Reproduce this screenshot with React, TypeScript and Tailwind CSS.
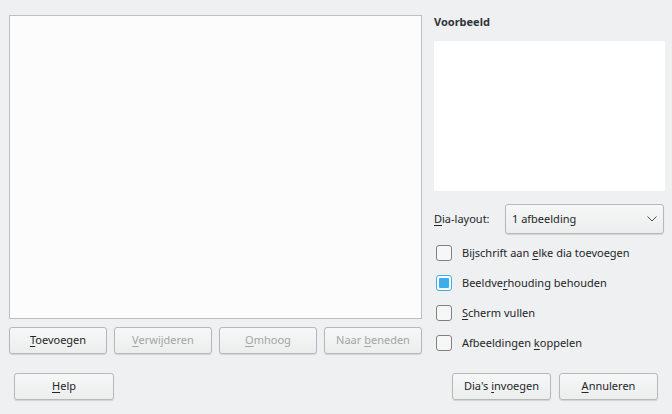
import type { ReactNode } from 'react';

function Btn({ children, disabled = false, className = '' }: { children: ReactNode; disabled?: boolean; className?: string }) {
  return (
    <button
      className={`flex h-[27px] items-center justify-center rounded-[3px] border border-[#b6b8ba] bg-gradient-to-b from-[#f6f7f7] to-[#eceded] shadow-[0_1px_1px_rgba(0,0,0,0.12)] text-[11px] ${
        disabled ? 'text-[#a3a5a6]' : 'text-[#232627]'
      } ${className}`}
    >
      <span>{children}</span>
    </button>
  );
}

function U({ children }: { children: ReactNode }) {
  return <span className="underline underline-offset-[2px] decoration-1">{children}</span>;
}

function Check({ checked = false, children }: { checked?: boolean; children: ReactNode }) {
  return (
    <div className="flex h-[30px] items-center pl-[2px]">
      {checked ? (
        <div className="flex h-[16px] w-[16px] items-center justify-center rounded-[3px] border border-[#3daee9] bg-[#fcfcfc]">
          <div className="h-[10px] w-[10px] rounded-[1px] bg-[#3daee9]" />
        </div>
      ) : (
        <div className="h-[16px] w-[16px] rounded-[3px] border border-[#7f8283] bg-[#f7f7f7]" />
      )}
      <span className="ml-[10px] text-[11px] text-[#232627]">{children}</span>
    </div>
  );
}

export default function App() {
  return (
    <div className="flex h-[414px] w-[672px] flex-col bg-[#eff0f1] font-['Noto_Sans','DejaVu_Sans',sans-serif] text-[#232627]">
      <div className="flex gap-[12px] pl-[9px] pt-[13px]">
        <div className="mt-[2px] flex w-[413px] flex-col">
          <div className="h-[304px] border border-[#bcbebf] bg-[#fcfcfc]" />
          <div className="mt-[8px] grid grid-cols-4 gap-[7px]">
            <Btn><U>T</U>oevoegen</Btn>
            <Btn disabled><U>V</U>erwijderen</Btn>
            <Btn disabled><U>O</U>mhoog</Btn>
            <Btn disabled>Naar <U>b</U>eneden</Btn>
          </div>
        </div>
        <div className="flex w-[231px] flex-col">
          <div className="h-[18px] text-[11px] font-bold leading-[18px] text-[#31363b]">Voorbeeld</div>
          <div className="mt-[10px] h-[150px] bg-white" />
          <div className="mt-[13px] flex h-[30px] items-center">
            <span className="w-[71px] text-[11px]"><U>D</U>ia-layout:</span>
            <div className="flex h-[30px] w-[159px] items-center justify-between rounded-[3px] border border-[#b6b8ba] bg-gradient-to-b from-[#f6f7f7] to-[#eceded] pl-[6px] pr-[6px] text-[11px] shadow-[0_1px_1px_rgba(0,0,0,0.12)]">
              <span>1 afbeelding</span>
              <svg width="10" height="6" viewBox="0 0 10 6" fill="none" stroke="#4d4d4d" strokeWidth="1">
                <path d="M0.5 0.5 L5 5 L9.5 0.5" />
              </svg>
            </div>
          </div>
          <div className="mt-[4px] flex flex-col">
            <Check>Bijschrift aan <U>e</U>lke dia toevoegen</Check>
            <Check checked>Beeldve<U>r</U>houding behouden</Check>
            <Check><U>S</U>cherm vullen</Check>
            <Check>Afbeeldingen <U>k</U>oppelen</Check>
          </div>
        </div>
      </div>
      <div className="mt-[15px] flex pl-[14px] pr-[14px]">
        <Btn className="w-[100px]"><U>H</U>elp</Btn>
        <div className="ml-auto flex gap-[8px]">
          <Btn className="w-[99px]">Dia's <U>i</U>nvoegen</Btn>
          <Btn className="w-[99px]"><U>A</U>nnuleren</Btn>
        </div>
      </div>
    </div>
  );
}
